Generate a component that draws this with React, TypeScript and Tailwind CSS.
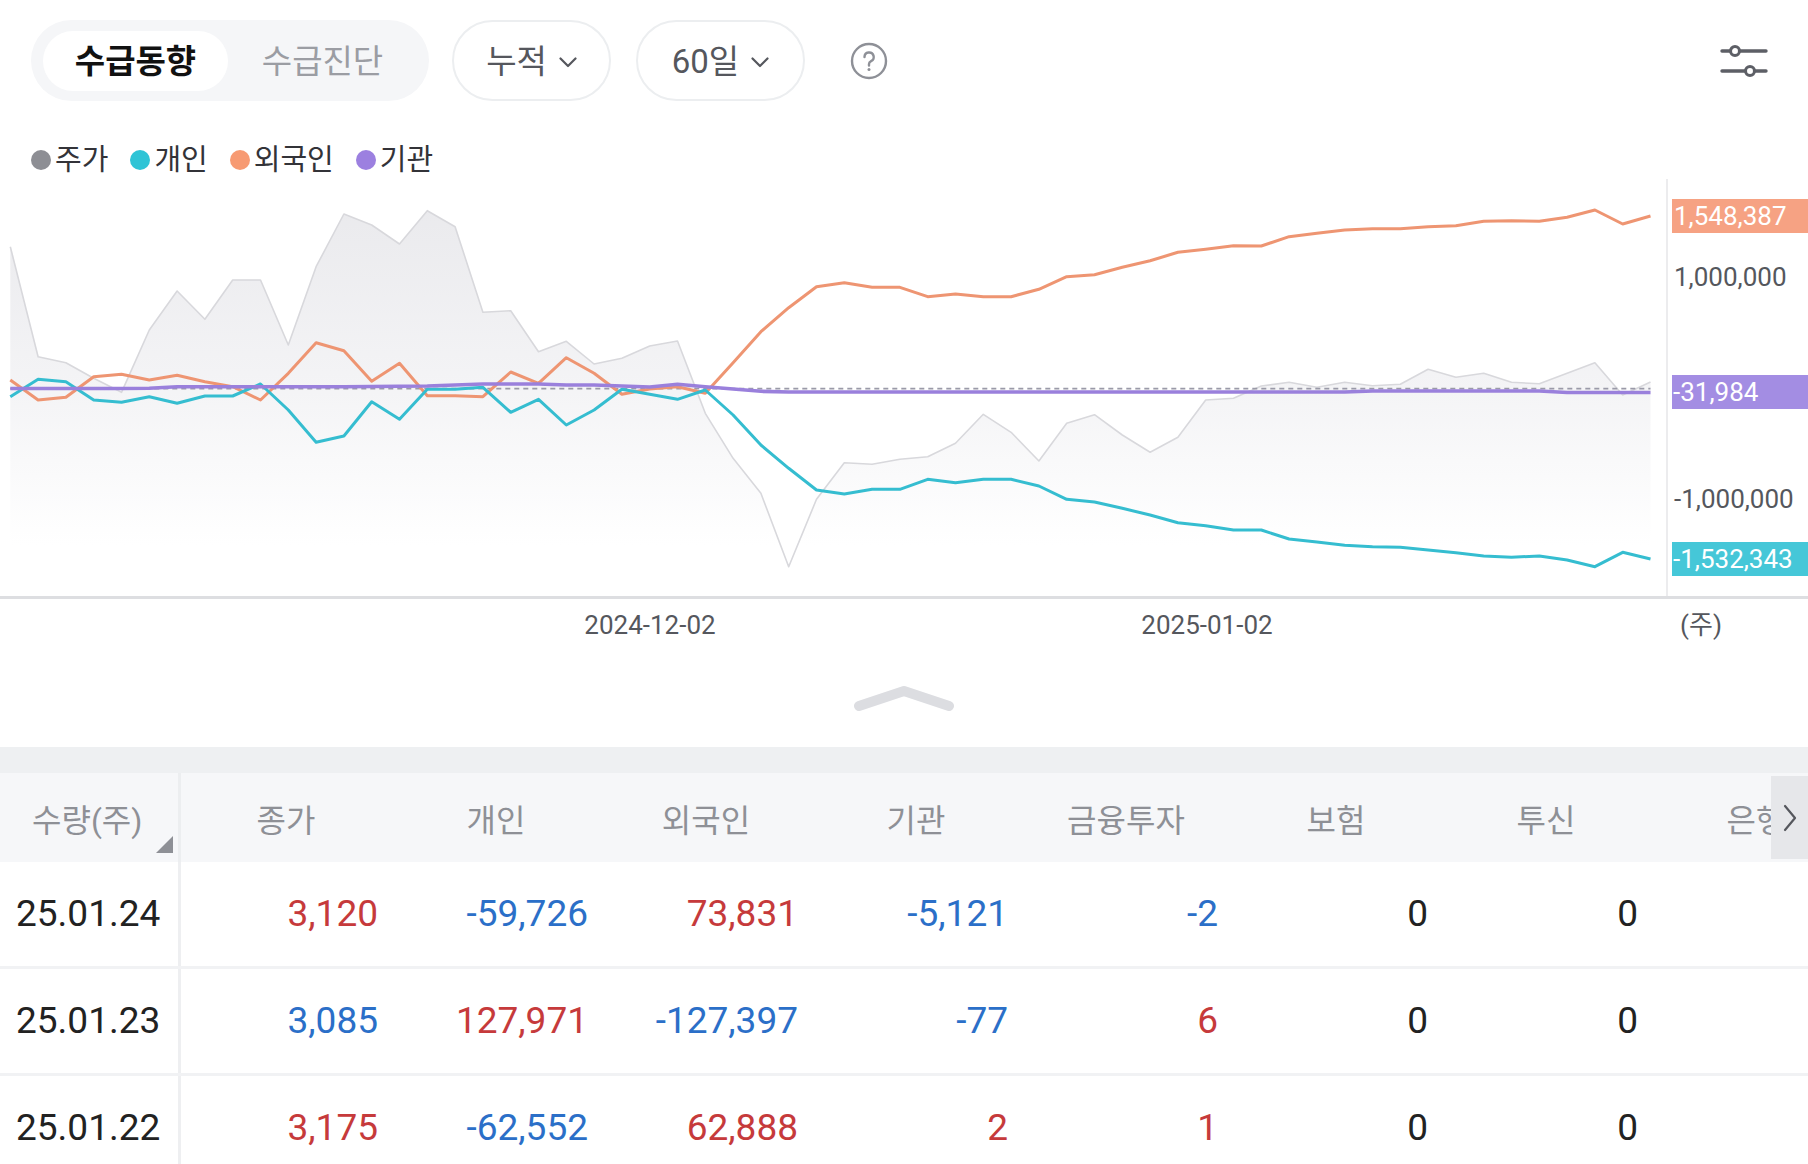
import React from "react";

// chart geometry (page pixels)
const X0 = 10.3;
const DX = 27.8;

const price = [
  246.7, 356.7, 362.7, 378.3, 392.3, 330, 291, 319.3, 280, 280, 345, 266.7, 214, 225, 244, 210.7, 226.7, 312.3,
  310.7, 351.7, 341.3, 364, 358.3, 346, 341, 413.3, 458.3, 493.3, 566.7, 499.3, 462.7, 464.3, 459.3, 456.7, 443.3,
  414.3, 432.3, 461, 423.3, 414.7, 435, 452.3, 437.3, 400, 398.3, 386, 382.3, 387.3, 382.3, 385.7, 384.3, 369.3,
  377.3, 373.3, 382.3, 383.7, 373.3, 362.7, 395, 382,
];

const foreign = [
  380, 400, 397.3, 376.7, 374.3, 380, 375.3, 381.7, 386.7, 400, 373.3, 342.7, 350.7, 381.3, 363.3, 395.7, 395.7,
  396.7, 372, 383.3, 357.7, 373.3, 394.3, 389, 386.7, 393.3, 362.7, 331.7, 307.7, 286.7, 282.7, 287.3, 287.3, 296.7,
  294, 296.7, 296.7, 289.3, 276.7, 274.7, 267.3, 260.7, 252.3, 249.3, 245.7, 246, 236.7, 233.3, 230, 228.7, 228.7,
  226.7, 225.7, 221.3, 220.7, 221.3, 217.3, 210, 224, 216,
];

const retail = [
  396.7, 379.3, 381.7, 400, 402.3, 396.7, 403.3, 396, 396, 384, 410, 442.3, 436, 401.7, 419.3, 389.3, 389.3, 387.3,
  412.3, 399.3, 425, 410, 389.3, 394.3, 399.3, 390, 415, 445, 468.3, 490, 494, 489.3, 489.3, 479.3, 482.7, 479.3,
  479.3, 486, 499.3, 502, 508.3, 515, 522.7, 525.7, 530, 530, 539, 542, 545.3, 546.7, 547.3, 550, 552.7, 556, 557.3,
  556, 560, 566.7, 552.3, 559,
];

const inst = [
  388.5, 388.5, 388.5, 388.5, 388.5, 388.3, 386.7, 386.7, 386.7, 386.7, 386.7, 386.7, 386.7, 386.5, 386.3, 386, 385,
  384, 384, 384, 385, 385, 386, 387, 384.3, 386.7, 389, 391.3,
  ...Array(21).fill(392),
  ...Array(7).fill(391),
  ...Array(4).fill(392.5),
];

const pts = (ys: number[]) => ys.map((y, i) => `${(X0 + i * DX).toFixed(1)},${y}`).join(" ");
const lastX = X0 + 59 * DX;

type Tone = "r" | "b" | "k";
const tone: Record<Tone, string> = {
  r: "text-[#c63a3b]",
  b: "text-[#2b6fc8]",
  k: "text-[#222222]",
};

const headers = ["종가", "개인", "외국인", "기관", "금융투자", "보험", "투신", "은행"];

const rows: { date: string; vals: [string, Tone][] }[] = [
  {
    date: "25.01.24",
    vals: [["3,120", "r"], ["-59,726", "b"], ["73,831", "r"], ["-5,121", "b"], ["-2", "b"], ["0", "k"], ["0", "k"]],
  },
  {
    date: "25.01.23",
    vals: [["3,085", "b"], ["127,971", "r"], ["-127,397", "b"], ["-77", "b"], ["6", "r"], ["0", "k"], ["0", "k"]],
  },
  {
    date: "25.01.22",
    vals: [["3,175", "r"], ["-62,552", "b"], ["62,888", "r"], ["2", "r"], ["1", "r"], ["0", "k"], ["0", "k"]],
  },
];

function Chevron() {
  return (
    <svg width="18" height="11" viewBox="0 0 18 11" fill="none">
      <path d="M1.5 1.5 L9 9 L16.5 1.5" stroke="#55575d" strokeWidth="2.2" strokeLinecap="round" strokeLinejoin="round" />
    </svg>
  );
}

function Legend({ color, label }: { color: string; label: string }) {
  return (
    <div className="flex items-center gap-[4px]">
      <span className={`h-[20px] w-[20px] rounded-full ${color}`} />
      <span className="text-[29px] leading-none text-[#333338]">{label}</span>
    </div>
  );
}

export default function App() {
  return (
    <div className="w-[1808px] h-[1164px] overflow-hidden bg-white font-['Roboto','Noto_Sans_CJK_KR',sans-serif]">
      {/* top controls */}
      <div className="flex h-[121px] items-start pt-[20px] pl-[31px] pr-[40px]">
        <div className="flex h-[81px] w-[398px] items-center rounded-full bg-[#f5f6f8] px-[12px]">
          <div className="flex h-[60px] w-[185px] items-center justify-center rounded-full bg-white pt-[3px] text-[33px] font-bold text-[#111111]">
            수급동향
          </div>
          <div className="flex flex-1 items-center justify-center pt-[3px] text-[33px] text-[#9b9da3]">수급진단</div>
        </div>
        <button className="ml-[23px] flex h-[81px] w-[159px] items-center justify-center gap-[12px] rounded-full border-2 border-[#eceef0] bg-white pt-[3px] text-[33px] text-[#55575d]">
          누적
          <Chevron />
        </button>
        <button className="ml-[25px] flex h-[81px] w-[169px] items-center justify-center gap-[12px] rounded-full border-2 border-[#eceef0] bg-white pt-[3px] text-[33px] text-[#55575d]">
          60일
          <Chevron />
        </button>
        <div className="ml-[45px] flex h-[81px] items-center">
          <svg width="38" height="38" viewBox="0 0 38 38" fill="none">
            <circle cx="19" cy="19" r="17" stroke="#8e9097" strokeWidth="2.4" />
            <path
              d="M14.5 15 a4.6 4.6 0 1 1 6.6 4.2 c-1.3 0.6 -2.1 1.5 -2.1 2.9 v1.4"
              stroke="#8e9097"
              strokeWidth="2.4"
              strokeLinecap="round"
            />
            <circle cx="19" cy="27.6" r="1.5" fill="#8e9097" />
          </svg>
        </div>
        <div className="ml-auto flex h-[81px] items-center">
          <svg width="50" height="36" viewBox="0 0 50 36" fill="none">
            <path d="M4 8 H12.5 M21.5 8 H48" stroke="#5d5f66" strokeWidth="3.4" strokeLinecap="round" />
            <circle cx="17" cy="8" r="4.5" stroke="#5d5f66" strokeWidth="3" />
            <path d="M4 28 H27.5 M36.5 28 H48" stroke="#5d5f66" strokeWidth="3.4" strokeLinecap="round" />
            <circle cx="32" cy="28" r="4.5" stroke="#5d5f66" strokeWidth="3" />
          </svg>
        </div>
      </div>

      {/* legend */}
      <div className="flex h-[58px] items-center gap-[22px] pt-[20px] pl-[31px]">
        <Legend color="bg-[#8d8e94]" label="주가" />
        <Legend color="bg-[#2ec4d6]" label="개인" />
        <Legend color="bg-[#f79a72]" label="외국인" />
        <Legend color="bg-[#9c80e0]" label="기관" />
      </div>

      {/* chart */}
      <div className="relative h-[421px]">
        <svg width="1808" height="421" viewBox="0 179 1808 421" className="block">
          <defs>
            <linearGradient id="priceFill" gradientUnits="userSpaceOnUse" x1="0" y1="205" x2="0" y2="545">
              <stop offset="0" stopColor="#eaeaed" />
              <stop offset="0.55" stopColor="#f4f4f6" />
              <stop offset="1" stopColor="#ffffff" />
            </linearGradient>
          </defs>
          <polygon points={`${pts(price)} ${lastX},596 ${X0},596`} fill="url(#priceFill)" />
          <polyline points={pts(price)} fill="none" stroke="#d8d8dc" strokeWidth="1.6" strokeLinejoin="round" />
          <line x1="1667" y1="179" x2="1667" y2="596" stroke="#ececee" strokeWidth="2" />
          <line x1={X0} y1="388.6" x2={lastX} y2="388.6" stroke="#9a9aa8" strokeWidth="1.6" strokeDasharray="5 4" />
          <polyline points={pts(foreign)} fill="none" stroke="#ee9572" strokeWidth="3" strokeLinejoin="round" />
          <polyline points={pts(retail)} fill="none" stroke="#35bdd0" strokeWidth="3" strokeLinejoin="round" />
          <polyline points={pts(inst)} fill="none" stroke="#9a80dc" strokeWidth="3.6" strokeLinejoin="round" />
          <line x1="0" y1="597.5" x2="1808" y2="597.5" stroke="#dddee1" strokeWidth="3" />
        </svg>

        <span className="absolute left-[1674px] top-[81px] text-[26px] leading-[34px] text-[#55575d]">1,000,000</span>
        <span className="absolute left-[1674px] top-[303px] text-[26px] leading-[34px] text-[#55575d]">-1,000,000</span>
        <div className="absolute left-[1672px] right-0 top-[20px] h-[34px] bg-[#f6a283] pl-[2px] text-[26px] leading-[34px] text-white">
          1,548,387
        </div>
        <div className="absolute left-[1672px] right-0 top-[196px] h-[34px] bg-[#a38de3] pl-[1px] text-[26px] leading-[34px] text-white">
          -31,984
        </div>
        <div className="absolute left-[1672px] right-0 top-[363px] h-[34px] bg-[#45c7d8] pl-[1px] text-[26px] leading-[34px] text-white">
          -1,532,343
        </div>
      </div>

      {/* x axis */}
      <div className="relative h-[50px] text-[26px] text-[#55575d]">
        <span className="absolute left-[650px] top-0 flex h-full -translate-x-1/2 items-center">2024-12-02</span>
        <span className="absolute left-[1207px] top-0 flex h-full -translate-x-1/2 items-center">2025-01-02</span>
        <span className="absolute left-[1701px] top-0 flex h-full -translate-x-1/2 items-center">(주)</span>
      </div>

      {/* collapse handle */}
      <div className="flex h-[97px] items-center justify-center">
        <svg width="102" height="28" viewBox="0 0 102 28" fill="none">
          <path d="M6 21 L51 6 L96 21" stroke="#dcdde1" strokeWidth="10" strokeLinecap="round" strokeLinejoin="round" />
        </svg>
      </div>

      <div className="h-[26px] bg-[#eef0f2]" />

      {/* table header */}
      <div className="relative flex h-[89px] bg-[#f6f7f9]">
        <div className="relative flex w-[181px] shrink-0 items-center border-r-[3px] border-[#eceef0] pl-[32px] pt-[6px] text-[32px] text-[#8e9096]">
          수량(주)
          <svg className="absolute right-[5px] bottom-[9px]" width="17" height="17" viewBox="0 0 17 17">
            <polygon points="17,0 17,17 0,17" fill="#8e9096" />
          </svg>
        </div>
        {headers.map((h) => (
          <div key={h} className="flex w-[210px] shrink-0 items-center justify-center pt-[6px] text-[32px] text-[#8e9096]">
            {h}
          </div>
        ))}
        <div className="absolute right-0 top-[3px] flex h-[83px] w-[37px] items-center justify-center bg-[#e6e7ea]">
          <svg width="14" height="28" viewBox="0 0 14 28" fill="none">
            <path d="M2 2 L12 14 L2 26" stroke="#55575d" strokeWidth="2.2" strokeLinecap="round" strokeLinejoin="round" />
          </svg>
        </div>
      </div>

      {/* rows */}
      {rows.map((r) => (
        <div key={r.date} className="flex h-[107px] border-b-[3px] border-[#f1f2f4]">
          <div className="flex w-[181px] shrink-0 items-center border-r-[3px] border-[#eeeff1] pl-[16px] text-[37px] text-[#222222]">
            {r.date}
          </div>
          {r.vals.map(([v, t], i) => (
            <div key={i} className={`flex w-[210px] shrink-0 items-center justify-end pr-[13px] text-[37px] ${tone[t]}`}>
              {v}
            </div>
          ))}
        </div>
      ))}
    </div>
  );
}
